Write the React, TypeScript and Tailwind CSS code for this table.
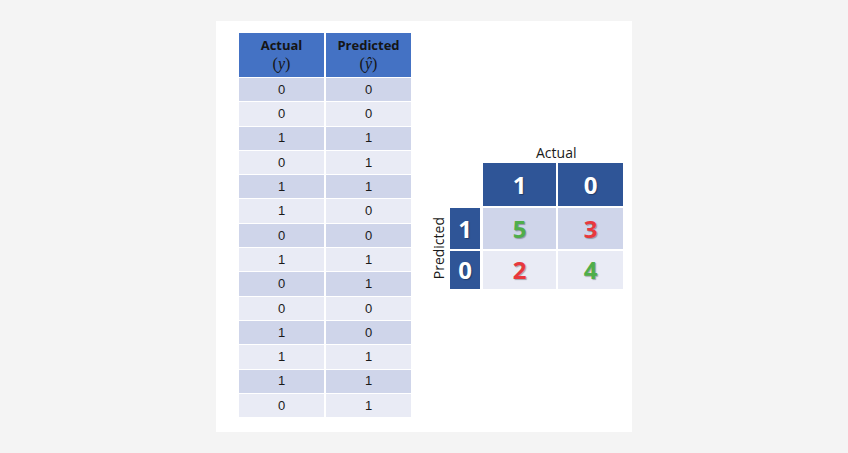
const rows: [number, number][] = [
  [0, 0], [0, 0], [1, 1], [0, 1], [1, 1], [1, 0], [0, 0],
  [1, 1], [0, 1], [0, 0], [1, 0], [1, 1], [1, 1], [0, 1],
];

const num = "font-['Noto_Sans',sans-serif] font-bold text-[24px] leading-none [text-shadow:1px_1px_1px_rgba(0,0,0,0.3)]";

export default function App() {
  return (
    <main className="w-[848px] h-[453px] bg-[#f4f4f4] flex items-center justify-center">
      <div className="w-[416px] h-[411px] bg-white flex items-start pt-[12px] pl-[23px]">
        {/* left table */}
        <div className="w-[172px] flex flex-col font-['Liberation_Sans',sans-serif]">
          <div className="h-[44px] flex gap-[2px]">
            {["Actual", "Predicted"].map((t, i) => (
              <div key={t} className="w-[85px] bg-[#4472C4] flex flex-col items-center justify-center text-[#151515]">
                <span className="font-['Open_Sans',sans-serif] font-bold text-[13px] leading-[17px]">{t}</span>
                <span className="font-['Liberation_Serif',serif] text-[16px] leading-[19px]">
                  (<i>{i === 0 ? "y" : "ŷ"}</i>)
                </span>
              </div>
            ))}
          </div>
          {rows.map(([a, p], i) => (
            <div key={i} className="h-[24.3px] pt-[1px] flex gap-[2px]">
              {[a, p].map((v, j) => (
                <div
                  key={j}
                  className={`w-[85px] flex items-center justify-center text-[13px] text-[#1a1a1a] ${i % 2 === 0 ? "bg-[#CFD5EA]" : "bg-[#E9EBF5]"}`}
                >
                  {v}
                </div>
              ))}
            </div>
          ))}
        </div>

        {/* confusion matrix */}
        <div className="ml-[17px] mt-[110px] flex flex-col font-['Open_Sans',sans-serif]">
          <div className="ml-[108px] h-[20px] text-[14px] leading-[20px] text-[#1a1a1a]">Actual</div>
          <div className="ml-[55px] flex gap-[2px]">
            <div className={`w-[73px] h-[43px] bg-[#2F5597] text-white flex items-center justify-center ${num}`}>1</div>
            <div className={`w-[65px] h-[43px] bg-[#2F5597] text-white flex items-center justify-center ${num}`}>0</div>
          </div>
          <div className="mt-[2px] flex">
            <div className="w-[22px] h-[81px] flex items-center justify-center">
              <span className="[writing-mode:vertical-rl] rotate-180 text-[14px] leading-none text-[#1a1a1a]">Predicted</span>
            </div>
            <div className="w-[30px] flex flex-col gap-[2px]">
              <div className={`h-[41px] bg-[#2F5597] text-white flex items-center justify-center ${num}`}>1</div>
              <div className={`h-[38px] bg-[#2F5597] text-white flex items-center justify-center ${num}`}>0</div>
            </div>
            <div className="ml-[3px] flex flex-col gap-[2px]">
              <div className="flex gap-[2px]">
                <div className={`w-[73px] h-[41px] bg-[#CFD5EA] text-[#4FAE4A] flex items-center justify-center ${num}`}>5</div>
                <div className={`w-[65px] h-[41px] bg-[#CFD5EA] text-[#E8383D] flex items-center justify-center ${num}`}>3</div>
              </div>
              <div className="flex gap-[2px]">
                <div className={`w-[73px] h-[38px] bg-[#E9EBF5] text-[#E8383D] flex items-center justify-center ${num}`}>2</div>
                <div className={`w-[65px] h-[38px] bg-[#E9EBF5] text-[#4FAE4A] flex items-center justify-center ${num}`}>4</div>
              </div>
            </div>
          </div>
        </div>
      </div>
    </main>
  );
}
